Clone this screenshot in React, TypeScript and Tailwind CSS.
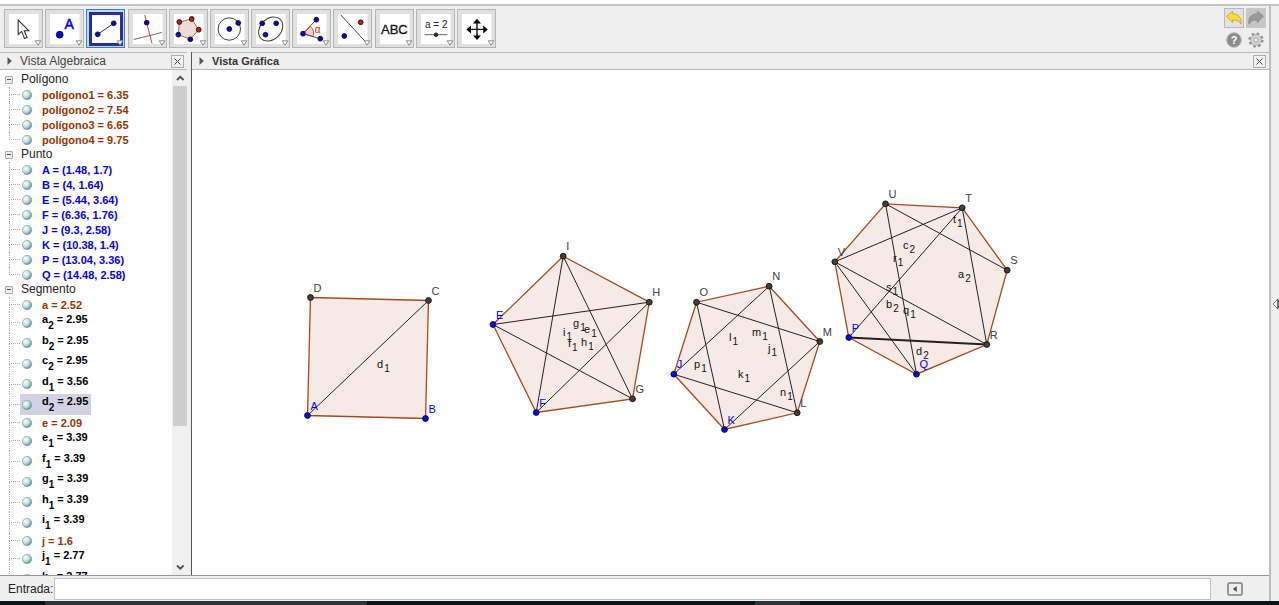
import type { ReactNode } from "react";

type Item = { name: string; sub?: string; value: string; color: string };
type Point = { name: string; x: number; y: number; free?: boolean };

const brown = "text-[#993300]";
const blue = "text-[#0000ff]";
const black = "text-black";

const polygons: Item[] = [
  { name: "polígono1", value: "6.35", color: brown },
  { name: "polígono2", value: "7.54", color: brown },
  { name: "polígono3", value: "6.65", color: brown },
  { name: "polígono4", value: "9.75", color: brown },
];

const pointItems: Item[] = [
  { name: "A", value: "(1.48, 1.7)", color: blue },
  { name: "B", value: "(4, 1.64)", color: blue },
  { name: "E", value: "(5.44, 3.64)", color: blue },
  { name: "F", value: "(6.36, 1.76)", color: blue },
  { name: "J", value: "(9.3, 2.58)", color: blue },
  { name: "K", value: "(10.38, 1.4)", color: blue },
  { name: "P", value: "(13.04, 3.36)", color: blue },
  { name: "Q", value: "(14.48, 2.58)", color: blue },
];

const segments: Item[] = [
  { name: "a", value: "2.52", color: brown },
  { name: "a", sub: "2", value: "2.95", color: black },
  { name: "b", sub: "2", value: "2.95", color: black },
  { name: "c", sub: "2", value: "2.95", color: black },
  { name: "d", sub: "1", value: "3.56", color: black },
  { name: "d", sub: "2", value: "2.95", color: black },
  { name: "e", value: "2.09", color: brown },
  { name: "e", sub: "1", value: "3.39", color: black },
  { name: "f", sub: "1", value: "3.39", color: black },
  { name: "g", sub: "1", value: "3.39", color: black },
  { name: "h", sub: "1", value: "3.39", color: black },
  { name: "i", sub: "1", value: "3.39", color: black },
  { name: "j", value: "1.6", color: brown },
  { name: "j", sub: "1", value: "2.77", color: black },
  { name: "k", sub: "1", value: "2.77", color: black },
];

const shapes: Point[][] = [
  [
    { name: "A", x: 115.5, y: 345.5, free: true },
    { name: "B", x: 233.5, y: 348.5, free: true },
    { name: "C", x: 236.5, y: 230.5 },
    { name: "D", x: 118.5, y: 227.5 },
  ],
  [
    { name: "E", x: 301, y: 254.5, free: true },
    { name: "F", x: 344.2, y: 342.5, free: true },
    { name: "G", x: 440.5, y: 328.8 },
    { name: "H", x: 457.3, y: 232.2 },
    { name: "I", x: 371.2, y: 186.2 },
  ],
  [
    { name: "J", x: 481.8, y: 304.2, free: true },
    { name: "K", x: 532.5, y: 359.5, free: true },
    { name: "L", x: 605.2, y: 342.8 },
    { name: "M", x: 627.8, y: 271.5 },
    { name: "N", x: 577.2, y: 216.2 },
    { name: "O", x: 504.5, y: 232.2 },
  ],
  [
    { name: "P", x: 656.8, y: 267.5, free: true },
    { name: "Q", x: 724.5, y: 304.2, free: true },
    { name: "R", x: 794.8, y: 274.5 },
    { name: "S", x: 815.2, y: 200.2 },
    { name: "T", x: 770.2, y: 137.8 },
    { name: "U", x: 693.5, y: 133.8 },
    { name: "V", x: 642.8, y: 191.8 },
  ],
];

const diagonals = [
  "AC", "EH", "EG", "IF", "IG", "FH",
  "OM", "OK", "NJ", "NL", "MK", "JL",
  "US", "UQ", "VT", "VR", "VQ", "PT", "TR", "PR",
];

const segmentLabels = [
  { name: "d", sub: "1", x: 185, y: 298 },
  { name: "e", sub: "1", x: 392, y: 263 },
  { name: "g", sub: "1", x: 381, y: 257 },
  { name: "i", sub: "1", x: 371, y: 266 },
  { name: "f", sub: "1", x: 376, y: 277 },
  { name: "h", sub: "1", x: 389, y: 276 },
  { name: "l", sub: "1", x: 537, y: 271 },
  { name: "m", sub: "1", x: 560, y: 266 },
  { name: "j", sub: "1", x: 576, y: 282 },
  { name: "k", sub: "1", x: 546, y: 308 },
  { name: "n", sub: "1", x: 588, y: 326 },
  { name: "p", sub: "1", x: 502, y: 298 },
  { name: "t", sub: "1", x: 761, y: 153 },
  { name: "c", sub: "2", x: 711, y: 179 },
  { name: "r", sub: "1", x: 701, y: 192 },
  { name: "a", sub: "2", x: 766, y: 208 },
  { name: "s", sub: "1", x: 694, y: 221 },
  { name: "b", sub: "2", x: 694, y: 238 },
  { name: "q", sub: "1", x: 711, y: 244 },
  { name: "d", sub: "2", x: 724, y: 285 },
];

const allPoints = shapes.flat();
const find = (name: string) => allPoints.find((p) => p.name === name)!;

const Dot = ({ x, y, fill = "#0000e0", r = 2.4 }: { x: number; y: number; fill?: string; r?: number }) => (
  <circle cx={x} cy={y} r={r} fill={fill} stroke="#111" strokeWidth="0.9" />
);

const tools: { label: string; icon: ReactNode }[] = [
  {
    label: "Elige y Mueve",
    icon: (
      <path
        d="M14.2 11v14.6l3.4-3.2 2.9 7.2 2.6-1.1-2.9-6.8h4.6z"
        fill="#fff"
        stroke="#333"
        strokeWidth="1.1"
      />
    ),
  },
  {
    label: "Punto",
    icon: (
      <>
        <Dot x={14.7} y={25.7} r={3.4} />
        <text x="19.5" y="19.8" fontSize="14" fill="#0000ff" stroke="#0000ff" strokeWidth="0.5">
          A
        </text>
      </>
    ),
  },
  {
    label: "Segmento",
    icon: (
      <>
        <path d="M11.7 25.3 27.7 14.3" stroke="#333" />
        <Dot x={11.7} y={25.3} />
        <Dot x={27.7} y={14.3} />
      </>
    ),
  },
  {
    label: "Perpendicular",
    icon: (
      <>
        <path d="M5.7 30.5 33.7 23.5" stroke="#7a6464" />
        <path d="M16.7 6 24 34.5" stroke="#f23c3c" />
        <Dot x={18.7} y={13.7} />
      </>
    ),
  },
  {
    label: "Polígono",
    icon: (
      <>
        <path d="M10.3 13 22.7 10 29.7 20.7 21.3 30.3 9.3 25.7z" fill="#eaddd4" stroke="#b06a4a" />
        <Dot x={10.3} y={13} fill="#e01010" />
        <Dot x={22.7} y={10} fill="#e01010" />
        <Dot x={29.7} y={20.7} fill="#e01010" />
        <Dot x={21.3} y={30.3} />
        <Dot x={9.3} y={25.7} />
      </>
    ),
  },
  {
    label: "Circunferencia",
    icon: (
      <>
        <circle cx="19.3" cy="20" r="11.2" fill="none" stroke="#444" />
        <Dot x={19.3} y={20} />
        <Dot x={28.2} y={14} />
      </>
    ),
  },
  {
    label: "Elipse",
    icon: (
      <>
        <ellipse
          cx="19.7"
          cy="20"
          rx="13.6"
          ry="10.4"
          transform="rotate(-45 19.7 20)"
          fill="none"
          stroke="#444"
        />
        <Dot x={11.2} y={14.3} />
        <Dot x={25.2} y={14.3} />
        <Dot x={14.5} y={25.7} />
      </>
    ),
  },
  {
    label: "Ángulo",
    icon: (
      <>
        <path d="M11 24.7 18.4 17.2A10.5 10.5 0 0 1 21.2 27.6z" fill="#fbcaca" stroke="#f05050" />
        <path d="M24.3 10.7 11 24.7 28.3 29.7" fill="none" stroke="#444" />
        <text x="22.8" y="24.4" fontSize="10" fill="#f01818">
          α
        </text>
        <Dot x={24.3} y={10.7} />
        <Dot x={11} y={24.7} />
        <Dot x={28.3} y={29.7} />
      </>
    ),
  },
  {
    label: "Simetría",
    icon: (
      <>
        <path d="M7.7 5.8 34.6 35" stroke="#444" />
        <Dot x={11.3} y={27} />
        <Dot x={27.7} y={13.3} fill="#e01010" />
      </>
    ),
  },
  {
    label: "Texto",
    icon: (
      <text x="6" y="25" fontSize="13" fill="#111" stroke="#111" strokeWidth="0.3">
        ABC
      </text>
    ),
  },
  {
    label: "Deslizador",
    icon: (
      <>
        <text x="9" y="18.6" fontSize="10" fill="#222">
          a = 2
        </text>
        <path d="M8.7 25.7H31.3" stroke="#666" />
        <Dot x={20} y={25.7} fill="#333" r={1.8} />
      </>
    ),
  },
  {
    label: "Desplaza Vista Gráfica",
    icon: (
      <>
        <path d="M20 13v15M13 20.4h15" stroke="#111" strokeWidth="1.4" />
        <path
          d="M20 9.8l4 4.6h-8zM20 31l4-4.6h-8zM9.4 20.4l4.6-4v8zM30.8 20.4l-4.6-4v8z"
          fill="#000"
        />
      </>
    ),
  },
];

const Toolbar = () => (
  <header className="flex h-[46px] items-start justify-between pt-[3px] pl-1 pr-[3px]">
    <div className="flex w-[492px] justify-between">
      {tools.map((tool, i) => (
        <button
          key={tool.label}
          type="button"
          aria-label={tool.label}
          className={
            i === 2
              ? "h-[39px] w-[39px] border border-[#3c7fb1] bg-[#bcdcf0]"
              : "h-[39px] w-[39px] border border-[#b4b4b4] bg-[#e0e0e0]"
          }
        >
          <svg viewBox="1 1 37 37" className="block h-[37px] w-[37px]">
            {i === 2 ? (
              <rect x="4.5" y="4.5" width="31" height="31" fill="#fff" stroke="#2b2ba8" strokeWidth="3" />
            ) : (
              <rect x="5" y="5" width="29.5" height="30" fill="#fff" />
            )}
            {tool.icon}
            <path d="M31.2 31.8h5.6L34 36.2z" fill="#fff" stroke="#8a8a8a" />
          </svg>
        </button>
      ))}
    </div>
    <div className="-mt-px grid grid-cols-2 gap-x-[2px]">
      <button type="button" aria-label="Deshacer" className="h-5 w-5 border border-[#b8b8b8] bg-[#e2e2e2]">
        <svg viewBox="0 0 18 18" className="block">
          <path
            d="M1.6 7.2 7.6 2.2v2.6c5.6.2 9.4 3.6 8.4 10.4-1.4-3.2-4-4.4-8.4-4.2v2.6z"
            fill="#f7df3c"
            stroke="#c9a21c"
            strokeWidth="0.9"
            strokeLinejoin="round"
          />
        </svg>
      </button>
      <button type="button" aria-label="Rehacer" className="h-5 w-5 border border-[#c8c8c8] bg-[#c6c6c6]">
        <svg viewBox="0 0 18 18" className="block">
          <path
            d="M16.4 7.2 10.4 2.2v2.6C4.8 5 1 8.400 2 15.200c1.400-3.200 4-4.400 8.400-4.200v2.600z"
            fill="#999"
            stroke="#8c8c8c"
            strokeWidth="0.9"
            strokeLinejoin="round"
          />
        </svg>
      </button>
      <button type="button" aria-label="Ayuda" className="flex h-6 w-5 items-center justify-center">
        <svg viewBox="0 0 16 16" className="h-4 w-4">
          <circle cx="8" cy="8" r="7.3" fill="#8c8c8c" stroke="#b4b4b4" />
          <text x="8" y="12" fontSize="11" fontWeight="700" textAnchor="middle" fill="#fff">
            ?
          </text>
        </svg>
      </button>
      <button type="button" aria-label="Preferencias" className="flex h-6 w-5 items-center justify-center">
        <svg viewBox="0 0 16 16" className="h-4 w-4">
          <circle cx="8" cy="8" r="6.4" fill="none" stroke="#8f8f8f" strokeWidth="2.4" strokeDasharray="2.5 2.52" />
          <circle cx="8" cy="8" r="5.4" fill="#d6d6d6" stroke="#999" strokeWidth="0.7" />
          <circle cx="8" cy="8" r="2.2" fill="#efefef" stroke="#8a8a8a" strokeWidth="0.8" />
        </svg>
      </button>
    </div>
  </header>
);

const PanelHeader = ({ title, bold }: { title: string; bold?: boolean }) => (
  <div className="flex h-[18px] shrink-0 items-center border-y border-[#b9b9b9] pl-[7px] pr-[3px]">
    <svg viewBox="0 0 5 8" className="mr-2 h-2 w-[5px]">
      <path d="M0.5 0 4.8 4 0.5 8z" fill="#555" />
    </svg>
    <h2 className={bold ? "text-[11px] font-bold text-[#333]" : "text-xs text-[#444]"}>{title}</h2>
    <button
      type="button"
      aria-label={`Cerrar ${title}`}
      className="ml-auto flex h-[13px] w-[13px] items-center justify-center border border-[#adadad] bg-[#f0f0f0]"
    >
      <svg viewBox="0 0 7 7" className="h-[7px] w-[7px]">
        <path d="M0.5 0.5 6.5 6.5M6.5 0.5 0.5 6.5" stroke="#444" />
      </svg>
    </button>
  </div>
);

const Group = ({ title, items, open }: { title: string; items: Item[]; open?: boolean }) => (
  <li>
    <div className="flex h-[15px] items-center pl-[5px]">
      <button
        type="button"
        aria-label={`Contraer ${title}`}
        className="mr-2 flex h-2 w-2 items-center justify-center rounded-[1px] border border-[#aaa] bg-[#eee]"
      >
        <span className="h-px w-1 bg-[#555]" />
      </button>
      <span className="text-xs leading-[17px] text-[#222]">{title}</span>
    </div>
    <ul>
      {items.map((item, i) => {
        const last = !open && i === items.length - 1;
        const selected = item.name === "d" && item.sub === "2";
        return (
          <li
            key={item.name + item.sub}
            className={
              item.sub ? "flex h-5 pl-[9px] leading-[15px] even:h-[21px]" : "flex h-[15px] pl-[9px] leading-[17px]"
            }
          >
            <span className="flex w-[11px] flex-col">
              <span className="flex-1 border-b border-l border-dotted border-[#aaa]" />
              <span className={last ? "flex-1" : "flex-1 border-l border-dotted border-[#aaa]"} />
            </span>
            <span className={selected ? "flex bg-[#d2d2e2] pl-[2px] pr-[3px]" : "flex pl-[2px] pr-[3px]"}>
              <svg viewBox="0 0 10 10" className="mr-[10px] h-[10px] w-[10px] self-center">
                <circle cx="5" cy="5" r="4.7" fill="url(#marble)" stroke="#6d9098" strokeWidth="0.5" />
              </svg>
              <span className={`whitespace-nowrap text-[11px]/[inherit] font-bold ${item.color}`}>
                {item.name}
                {item.sub && <sub className="bottom-0 align-[-6px] text-[10px]">{item.sub}</sub>}
                {" = "}
                {item.value}
              </span>
            </span>
          </li>
        );
      })}
    </ul>
  </li>
);

const AlgebraView = () => (
  <aside className="flex w-[192px] shrink-0 flex-col border-r border-[#555] pr-1">
    <PanelHeader title="Vista Algebraica" />
    <div className="flex min-h-0 flex-1">
      <ul className="h-full min-w-0 flex-1 overflow-hidden bg-white pt-[2px]">
        <Group title="Polígono" items={polygons} />
        <Group title="Punto" items={pointItems} />
        <Group title="Segmento" items={segments} open />
      </ul>
      <div className="flex w-[15px] flex-col items-center bg-[#f0f0f0]">
        <svg viewBox="0 0 14 16" className="h-4 w-[14px]">
          <path d="M4 10 7.3 6.8 10.6 10" fill="none" stroke="#505050" strokeWidth="1.8" />
        </svg>
        <div className="h-[340px] w-[14px] bg-[#cdcdcd]" />
        <svg viewBox="0 0 14 16" className="mt-auto h-4 w-[14px]">
          <path d="M4 6.5 7.3 9.7 10.6 6.5" fill="none" stroke="#505050" strokeWidth="1.8" />
        </svg>
      </div>
    </div>
  </aside>
);

const GraphicsView = () => (
  <section className="flex min-w-0 flex-1 flex-col">
    <PanelHeader title="Vista Gráfica" bold />
    <div className="min-h-0 flex-1 bg-white">
      <svg className="block h-full w-full">
        {shapes.map((shape, i) => (
          <polygon
            key={i}
            points={shape.map((p) => `${p.x},${p.y}`).join(" ")}
            fill="#f5eae6"
            stroke="#a34a20"
            strokeWidth="1.3"
          />
        ))}
        {diagonals.map((d) => {
          const a = find(d[0]);
          const b = find(d[1]);
          return (
            <line
              key={d}
              x1={a.x}
              y1={a.y}
              x2={b.x}
              y2={b.y}
              stroke="#222"
              strokeWidth={d === "PR" ? 2 : 1}
            />
          );
        })}
        {allPoints.map((p) => (
          <g key={p.name}>
            <circle cx={p.x} cy={p.y} r="2.9" fill={p.free ? "#0000ff" : "#404040"} stroke="#111" strokeWidth="0.9" />
            <text x={p.x + 3} y={p.y - 6} fontSize="11" fill={p.free ? "#0000ff" : "#404040"}>
              {p.name}
            </text>
          </g>
        ))}
        {segmentLabels.map((l) => (
          <text key={l.name + l.sub} x={l.x} y={l.y} fontSize="11" fill="#111">
            {l.name}
            <tspan dx="1" dy="4" fontSize="10">
              {l.sub}
            </tspan>
          </text>
        ))}
      </svg>
    </div>
  </section>
);

const InputBar = () => (
  <form className="flex h-[26px] shrink-0 items-center border-t border-[#999] pl-2 pr-[26px]">
    <label htmlFor="entrada" className="w-[46px] text-xs text-[#222]">
      Entrada:
    </label>
    <input id="entrada" type="text" className="h-[22px] min-w-0 flex-1 border border-[#c0c0c0] bg-white px-1 text-xs" />
    <button type="button" aria-label="Ayuda de Entrada" className="ml-4">
      <svg viewBox="0 0 16 14" className="block h-[14px] w-4">
        <rect x="1" y="1" width="14" height="12" rx="1.5" fill="#eee" stroke="#808080" strokeWidth="1.6" />
        <path d="M9.800 4v6L5.800 7z" fill="#555" />
      </svg>
    </button>
  </form>
);

const App = () => {
  return (
    <div className="flex h-screen flex-col bg-[#efefef] font-['Liberation_Sans',Arial,sans-serif]">
      <div className="h-1 shrink-0 bg-white" />
      <div className="flex min-h-0 flex-1 border-t-2 border-[#c6c6c6]">
        <main className="flex min-w-0 flex-1 flex-col">
          <Toolbar />
          <div className="flex min-h-0 flex-1">
            <AlgebraView />
            <GraphicsView />
          </div>
          <InputBar />
        </main>
        <div className="flex w-[10px] items-center justify-center border-l-2 border-[#bdbdbd]">
          <svg viewBox="0 0 7 12" className="h-3 w-[7px]">
            <path d="M6 1v10L1 6z" fill="#eee" stroke="#777" />
            <path d="M6 1v10" stroke="#333" />
          </svg>
        </div>
      </div>
      <footer className="flex h-1 shrink-0 bg-[#06141a]">
        <div className="w-[45px]" />
        <div className="w-[322px] bg-[#2e3436]" />
        <div className="flex-1" />
        <div className="w-[45px] bg-[#2e3436]" />
        <div className="w-[479px]" />
      </footer>
      <svg className="absolute h-0 w-0" aria-hidden="true">
        <defs>
          <radialGradient id="marble" cx="0.35" cy="0.35" r="0.75">
            <stop offset="0" stopColor="#ffffff" />
            <stop offset="0.5" stopColor="#c4dccf" />
            <stop offset="1" stopColor="#2f7fae" />
          </radialGradient>
        </defs>
      </svg>
    </div>
  );
};

export default App;
